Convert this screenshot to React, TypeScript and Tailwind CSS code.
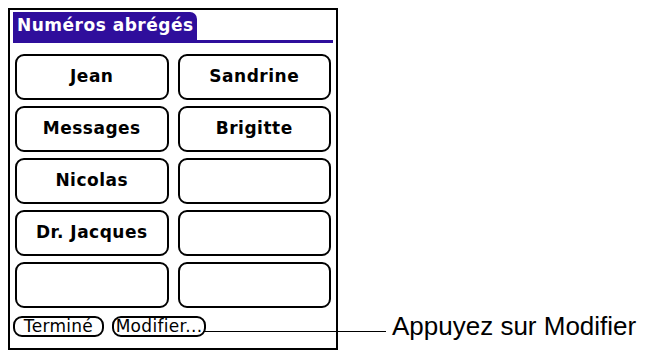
import React from "react";

// --- Data ---

const SPEED_DIAL: string[] = [
  "Jean",
  "Sandrine",
  "Messages",
  "Brigitte",
  "Nicolas",
  "",
  "Dr. Jacques",
  "",
  "",
  "",
];

const PALM_FONT = "font-['DejaVu_Sans',sans-serif]";

// --- Sub-components ---

const DialButton = ({ label }: { label: string }) => (
  <div className="flex h-[46px] items-center justify-center rounded-[9px] border-2 border-black text-[17px] font-bold tracking-[0.5px] text-black">
    {label}
  </div>
);

const PillButton = ({ label, width }: { label: string; width: string }) => (
  <div
    className={`flex h-[21px] ${width} items-center justify-center rounded-[9px] border-2 border-black text-[17px] leading-none tracking-[0.3px] text-black`}
  >
    {label}
  </div>
);

// --- Main Component ---

export default function App() {
  return (
    <div className="relative flex h-[354px] w-[651px] bg-white">
      {/* Palm screen */}
      <div
        className={`ml-[8px] mt-[8px] flex h-[342px] w-[330px] flex-col border-2 border-black px-[3px] pt-[2px] ${PALM_FONT}`}
      >
        {/* Title tab */}
        <div className="flex border-b-[3px] border-[#2f0e9c]">
          <div className="flex h-[28px] w-[184px] items-center rounded-tr-[7px] bg-[#2f0e9c] pl-[4px] text-[17px] font-bold tracking-[0.5px] text-white">
            Numéros abrégés
          </div>
        </div>

        {/* Speed dial grid */}
        <div className="mt-[11px] grid grid-cols-2 gap-x-[9px] gap-y-[6px] px-[2px]">
          {SPEED_DIAL.map((label, i) => (
            <DialButton key={i} label={label} />
          ))}
        </div>

        {/* Bottom buttons */}
        <div className="mt-[8px] flex gap-[8px]">
          <PillButton label="Terminé" width="w-[91px]" />
          <PillButton label="Modifier..." width="w-[94px]" />
        </div>
      </div>

      {/* Callout */}
      <div className="ml-[54px] mt-[312px] h-fit font-['Liberation_Sans',Arial,sans-serif] text-[26px] leading-[28px] text-black">
        Appuyez sur Modifier
      </div>
      <div className="absolute left-[203px] top-[331px] h-px w-[183px] bg-black" />
    </div>
  );
}
